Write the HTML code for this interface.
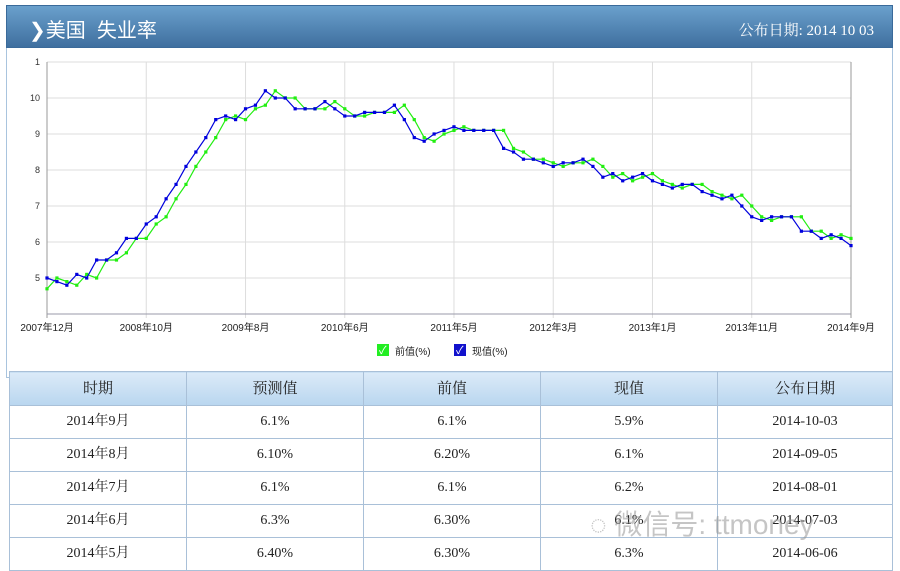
<!DOCTYPE html>
<html><head><meta charset="utf-8"><style>
body{margin:0;width:900px;height:568px;background:#fff;overflow:hidden;position:relative;font-family:"Liberation Serif","Noto Serif CJK SC",serif}
.hd{position:absolute;left:6px;top:5px;width:887px;height:43px;background:linear-gradient(#6aa0cc,#3f6f9f);border:1px solid #3a6a9a;box-sizing:border-box}
.hd .t{position:absolute;left:22px;top:8px;color:#fff;font:20px "Liberation Sans","Noto Sans CJK SC",sans-serif}
.hd .d{position:absolute;right:18px;top:13px;color:#fff;font:15px "Liberation Serif","Noto Serif CJK SC",serif}
.panel{position:absolute;left:6px;top:48px;width:887px;height:330px;border:1px solid #a9c4de;border-top:none;box-sizing:border-box}
table{position:absolute;left:9px;top:371px;width:884px;border-collapse:collapse;font-size:14px;color:#222}
td,th{border:1px solid #a9c0d8;text-align:center;height:32px;line-height:32px;padding:0;font-weight:normal;vertical-align:middle}
th{background:linear-gradient(#dbeaf8,#b9d6ef);height:33px;font-size:15px}
svg{position:absolute;left:0;top:0}
.wm{position:absolute;left:590px;top:503px;font:28px "Liberation Sans","Noto Sans CJK SC",sans-serif;color:rgba(150,150,150,.55)}
</style></head><body>
<div class="hd"><div class="t">❯美国&nbsp;&nbsp;失业率</div><div class="d">公布日期: 2014 10 03</div></div>
<div class="panel"></div>
<svg id="c" width="900" height="370" font-family="Liberation Sans,Noto Sans CJK SC,sans-serif"></svg>
<table>
<tr><th style="width:176px">时期</th><th style="width:176px">预测值</th><th style="width:176px">前值</th><th style="width:176px">现值</th><th>公布日期</th></tr>
<tr><td>2014年9月</td><td>6.1%</td><td>6.1%</td><td>5.9%</td><td>2014-10-03</td></tr>
<tr><td>2014年8月</td><td>6.10%</td><td>6.20%</td><td>6.1%</td><td>2014-09-05</td></tr>
<tr><td>2014年7月</td><td>6.1%</td><td>6.1%</td><td>6.2%</td><td>2014-08-01</td></tr>
<tr><td>2014年6月</td><td>6.3%</td><td>6.30%</td><td>6.1%</td><td>2014-07-03</td></tr>
<tr><td>2014年5月</td><td>6.40%</td><td>6.30%</td><td>6.3%</td><td>2014-06-06</td></tr>
</table>
<div class="wm">◌ 微信号: ttmoney</div>
<script>
var b=[5.0,4.9,4.8,5.1,5.0,5.5,5.5,5.7,6.1,6.1,6.5,6.7,7.2,7.6,8.1,8.5,8.9,9.4,9.5,9.4,9.7,9.8,10.2,10.0,10.0,9.7,9.7,9.7,9.9,9.7,9.5,9.5,9.6,9.6,9.6,9.8,9.4,8.9,8.8,9.0,9.1,9.2,9.1,9.1,9.1,9.1,8.6,8.5,8.3,8.3,8.2,8.1,8.2,8.2,8.3,8.1,7.8,7.9,7.7,7.8,7.9,7.7,7.6,7.5,7.6,7.6,7.4,7.3,7.2,7.3,7.0,6.7,6.6,6.7,6.7,6.7,6.3,6.3,6.1,6.2,6.1,5.9];
var g=[4.7];for(var i=1;i<b.length;i++)g.push(b[i-1]);
var s='',L=47,R=851,n=81,X=function(i){return L+(R-L)*i/n},Y=function(v){return 98+(10-v)*36};
s+='<rect x="47" y="62" width="804" height="252" fill="#fff"/>';
for(var v=5;v<=11;v++){s+='<line x1="47" x2="851" y1="'+Y(v)+'" y2="'+Y(v)+'" stroke="#ddd"/><text x="40" y="'+(Y(v)+3)+'" font-size="9" text-anchor="end" fill="#333">'+(v==11?'1':v)+'</text>';}
var lb=['2007年12月','2008年10月','2009年8月','2010年6月','2011年5月','2012年3月','2013年1月','2013年11月','2014年9月'],mi=[0,10,20,30,41,51,61,71,81];
for(var k=0;k<9;k++){var x=X(mi[k]);s+='<line x1="'+x+'" x2="'+x+'" y1="62" y2="318" stroke="'+(k?'#ddd':'#999')+'"/><text x="'+x+'" y="331" font-size="10" text-anchor="middle" fill="#222">'+lb[k]+'</text>';}
s+='<line x1="47" x2="851" y1="314" y2="314" stroke="#99a"/><line x1="851" x2="851" y1="62" y2="318" stroke="#999"/>';
function ser(a,c){var p='';for(var i=0;i<a.length;i++)p+=(i?'L':'M')+X(i).toFixed(1)+' '+Y(a[i]).toFixed(1);s+='<path d="'+p+'" fill="none" stroke="'+c+'" stroke-width="1.2"/>';for(i=0;i<a.length;i++)s+='<rect x="'+(X(i)-1.6)+'" y="'+(Y(a[i])-1.6)+'" width="3.2" height="3.2" fill="'+c+'"/>';}
ser(g,'#22ee11');ser(b,'#0000dd');
s+='<rect x="377" y="344" width="12" height="12" fill="#2e2"/><text x="379" y="354" font-size="11" fill="#fff">✓</text><text x="395" y="355" font-size="10" fill="#222">前值(%)</text>';
s+='<rect x="454" y="344" width="12" height="12" fill="#11c"/><text x="456" y="354" font-size="11" fill="#fff">✓</text><text x="472" y="355" font-size="10" fill="#222">现值(%)</text>';
document.getElementById('c').innerHTML=s;
</script>
</body></html>
